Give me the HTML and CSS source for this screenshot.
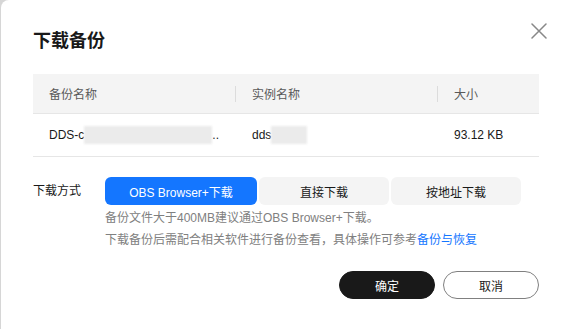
FILE: index.html
```html
<!DOCTYPE html>
<html lang="zh-CN">
<head>
  <meta charset="UTF-8">
  <title>下载备份</title>
  <link rel="stylesheet" href="styles.css">
</head>
<body>
<div class="dialog">
  <button class="close" aria-label="关闭">
    <svg width="16" height="16" viewBox="0 0 16 16" fill="none" stroke="currentColor" stroke-width="1.5" stroke-linecap="round">
      <path d="M1 1L15 15M15 1L1 15"></path>
    </svg>
  </button>

  <h2 class="title">下载备份</h2>

  <div class="table">
    <div class="row head">
      <div class="cell">备份名称</div>
      <div class="cell sep">实例名称</div>
      <div class="cell sep">大小</div>
    </div>
    <div class="row">
      <div class="cell">DDS-c<span class="mask mask-long"></span>..</div>
      <div class="cell">dds<span class="mask mask-short"></span></div>
      <div class="cell">93.12 KB</div>
    </div>
  </div>

  <div class="mode">
    <div class="mode-label">下载方式</div>
    <div class="mode-body">
      <div class="segments">
        <button class="segment active">OBS Browser+下载</button>
        <button class="segment">直接下载</button>
        <button class="segment">按地址下载</button>
      </div>
      <p class="hint">备份文件大于400MB建议通过OBS Browser+下载。</p>
      <p class="hint">下载备份后需配合相关软件进行备份查看，具体操作可参考<a href="#">备份与恢复</a></p>
    </div>
  </div>

  <div class="footer">
    <button class="btn btn-primary">确定</button>
    <button class="btn btn-default">取消</button>
  </div>
</div>
</body>
</html>
```

FILE: styles.css
```css
:root {
  --text: #191919;
  --text-secondary: #595959;
  --text-hint: #808080;
  --blue: #1476ff;
  --gray-bg: #f4f4f4;
  --line: #e6e6e6;
}

* {
  margin: 0;
  padding: 0;
  box-sizing: border-box;
}

body {
  font-family: 'Liberation Sans', 'Noto Sans CJK SC', sans-serif;
  background: #d6d6d6;
  color: var(--text);
  font-size: 12px;
  overflow: hidden;
}

.dialog {
  position: relative;
  margin-left: 1px;
  width: 580px;
  height: 340px;
  background: white;
  border-radius: 8px 0 0 0;
  padding: 29px 0 0 32px;
}

.close {
  position: absolute;
  top: 23px;
  left: 530px;
  background: none;
  border: none;
  color: #888;
  width: 16px;
  height: 16px;
  cursor: pointer;
}

.close svg {
  display: block;
}

.title {
  font-size: 18px;
  line-height: 24px;
  font-weight: 700;
  color: var(--text);
  margin-bottom: 21px;
}

.table {
  width: 506px;
}

.row {
  display: grid;
  grid-template-columns: 203px 202px 1fr;
  height: 43px;
  border-bottom: 1px solid var(--line);
  align-items: center;
}

.row.head {
  height: 40px;
  background: var(--gray-bg);
  color: var(--text-secondary);
}

.cell {
  padding-left: 16px;
  display: flex;
  align-items: center;
  white-space: nowrap;
}

.cell.sep {
  position: relative;
}

.cell.sep::before {
  content: '';
  position: absolute;
  left: -1px;
  top: 50%;
  margin-top: -8px;
  width: 1px;
  height: 16px;
  background: #dcdcdc;
}

.mask {
  display: inline-block;
  height: 18px;
  background: #ebebeb;
  filter: blur(1px);
}

.mask-long {
  width: 128px;
}

.mask-short {
  width: 36px;
}

.mode {
  display: flex;
  margin-top: 20px;
}

.mode-label {
  width: 72px;
  line-height: 28px;
  color: var(--text);
}

.segments {
  display: flex;
  gap: 2px;
  margin-bottom: 2px;
}

.segment {
  height: 28px;
  width: 130px;
  border: none;
  border-radius: 6px;
  background: var(--gray-bg);
  color: var(--text);
  font-family: inherit;
  font-size: 12px;
  cursor: pointer;
}

.segment.active {
  width: 152px;
  background: var(--blue);
  color: white;
}

.hint {
  line-height: 22px;
  color: var(--text-hint);
  white-space: nowrap;
}

.hint a {
  color: var(--blue);
  text-decoration: none;
}

.footer {
  display: flex;
  gap: 8px;
  width: 506px;
  justify-content: flex-end;
  margin-top: 20px;
}

.btn {
  width: 96px;
  height: 28px;
  border-radius: 14px;
  font-family: inherit;
  font-size: 12px;
  cursor: pointer;
}

.btn-primary {
  background: var(--text);
  color: white;
  border: 1px solid var(--text);
}

.btn-default {
  background: white;
  color: var(--text);
  border: 1px solid #808080;
}
```
